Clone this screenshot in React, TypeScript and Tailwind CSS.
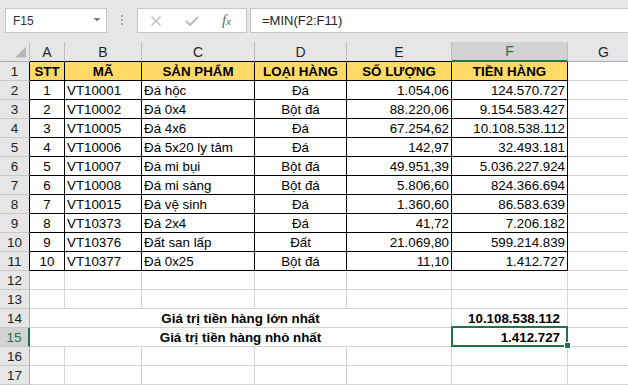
import React from "react";

type Row = [string, string, string, string, string, string];

const data: Row[] = [
  ["1", "VT10001", "Đá hộc", "Đá", "1.054,06", "124.570.727"],
  ["2", "VT10002", "Đá 0x4", "Bột đá", "88.220,06", "9.154.583.427"],
  ["3", "VT10005", "Đá 4x6", "Đá", "67.254,62", "10.108.538.112"],
  ["4", "VT10006", "Đá 5x20 ly tâm", "Đá", "142,97", "32.493.181"],
  ["5", "VT10007", "Đá mi bụi", "Bột đá", "49.951,39", "5.036.227.924"],
  ["6", "VT10008", "Đá mi sàng", "Bột đá", "5.806,60", "824.366.694"],
  ["7", "VT10015", "Đá vệ sinh", "Đá", "1.360,60", "86.583.639"],
  ["8", "VT10373", "Đá 2x4", "Đá", "41,72", "7.206.182"],
  ["9", "VT10376", "Đất san lấp", "Đất", "21.069,80", "599.214.839"],
  ["10", "VT10377", "Đá 0x25", "Bột đá", "11,10", "1.412.727"],
];

const headers = ["STT", "MÃ", "SẢN PHẨM", "LOẠI HÀNG", "SỐ LƯỢNG", "TIỀN HÀNG"];

const base =
  "flex items-end pb-px leading-[15px] whitespace-nowrap overflow-hidden border-r border-b";

const alignCls = [
  "justify-center",
  "justify-start pl-[2px]",
  "justify-start pl-[2px]",
  "justify-center",
  "justify-end pr-[2px]",
  "justify-end pr-[2px]",
];

function RowHeader({ n }: { n: number }) {
  let cls =
    "flex items-end justify-center pb-px leading-[15px] text-[13.5px] border-b border-b-[#c8c8c8] ";
  if (n === 15) cls += "bg-[#d2d2d2] text-[#217346] border-r-2 border-r-[#217346]";
  else if (n >= 1 && n <= 11) cls += "bg-[#e6e6e6] text-[#222222] border-r border-r-black";
  else cls += "bg-[#e6e6e6] text-[#222222] border-r border-r-[#ababab]";
  return <div className={cls}>{n}</div>;
}

function EmptyCell() {
  return <div className={`${base} border-[#d4d4d4] bg-white`} />;
}

export default function App() {
  const rows: React.ReactNode[] = [];
  for (let r = 1; r <= 17; r++) {
    const cells: React.ReactNode[] = [<RowHeader key={`h${r}`} n={r} />];
    if (r === 1) {
      headers.forEach((h, i) => {
        cells.push(
          <div
            key={`c${r}-${i}`}
            className={`${base} border-black bg-[#ffd966] font-bold justify-center`}
          >
            {h}
          </div>
        );
      });
      cells.push(<EmptyCell key={`g${r}`} />);
    } else if (r <= 11) {
      data[r - 2].forEach((v, i) => {
        cells.push(
          <div key={`c${r}-${i}`} className={`${base} border-black bg-white ${alignCls[i]}`}>
            {v}
          </div>
        );
      });
      cells.push(<EmptyCell key={`g${r}`} />);
    } else if (r === 14 || r === 15) {
      cells.push(
        <div
          key={`m${r}`}
          className={`${base} col-span-5 border-[#d4d4d4] bg-white justify-center font-bold`}
        >
          {r === 14 ? "Giá trị tiền hàng lớn nhất" : "Giá trị tiền hàng nhỏ nhất"}
        </div>
      );
      if (r === 14) {
        cells.push(
          <div key={`f${r}`} className={`${base} border-[#d4d4d4] bg-white justify-end pr-[7px] font-bold`}>
            10.108.538.112
          </div>
        );
      } else {
        cells.push(
          <div
            key={`f${r}`}
            className="relative flex items-end pb-px leading-[15px] whitespace-nowrap border-r border-b border-[#d4d4d4] bg-white justify-end pr-[7px] font-bold"
          >
            1.412.727
            <div className="absolute -left-px -top-[2px] w-[117px] h-[21px] border-2 border-[#217346] z-10" />
            <div className="absolute left-[112px] top-[14px] w-[7px] h-[7px] bg-[#217346] border border-white z-20" />
          </div>
        );
      }
      cells.push(<EmptyCell key={`g${r}`} />);
    } else {
      for (let i = 0; i < 7; i++) cells.push(<EmptyCell key={`e${r}-${i}`} />);
    }
    rows.push(...cells);
  }

  const colLetters = ["A", "B", "C", "D", "E", "F", "G"];
  const colHeaderCls = (i: number) => {
    const c =
      "flex items-end justify-center pb-px leading-[16px] text-[14px] border-r border-r-[#bdbdbd] ";
    if (i < 5) return c + "border-b border-b-black bg-[#e6e6e6] text-[#262626]";
    if (i === 5) return c + "border-b-2 border-b-[#217346] bg-[#d2d2d2] text-[#217346]";
    return c + "border-b border-b-[#ababab] bg-[#e6e6e6] text-[#262626]";
  };

  return (
    <div className="w-[628px] h-[385px] overflow-hidden bg-white font-['Liberation_Sans',Arial,sans-serif] text-black">
      {/* Formula bar */}
      <div className="h-[42px] bg-[#e6e6e6] flex items-start pt-[8px]">
        <div className="ml-[5px] w-[102px] h-[25px] bg-white border border-[#c6c6c6] flex items-center pl-[7px] relative">
          <span className="text-[12px] text-[#333333]">F15</span>
          <svg className="absolute left-[87px] top-[9px]" width="8" height="4" viewBox="0 0 8 4">
            <path d="M0.5 0H7.5L4 3.5Z" fill="#7a7a7a" />
          </svg>
        </div>
        <div className="w-[30px] flex flex-col items-center gap-[2px] pt-[7px]">
          <div className="w-[2px] h-[2px] bg-[#a8a8a8]" />
          <div className="w-[2px] h-[2px] bg-[#a8a8a8]" />
          <div className="w-[2px] h-[2px] bg-[#a8a8a8]" />
        </div>
        <div className="w-[110px] h-[25px] bg-white border border-[#c6c6c6] flex items-center">
          <svg className="ml-[13px]" width="10" height="10" viewBox="0 0 10 10">
            <path d="M0.5 0.5L9.5 9.5M9.5 0.5L0.5 9.5" stroke="#bdbdbd" strokeWidth="1.4" />
          </svg>
          <svg className="ml-[24px]" width="14" height="10" viewBox="0 0 14 10">
            <path d="M1 5L5 9L13 1" stroke="#bdbdbd" strokeWidth="2" fill="none" />
          </svg>
          <span className="ml-[23px] font-['Liberation_Serif',serif] italic text-[#666666] leading-none flex items-baseline">
            <span className="text-[15px]">f</span>
            <span className="text-[11px]">x</span>
          </span>
        </div>
        <div className="ml-[3px] flex-1 h-[25px] bg-white border border-r-0 border-[#c6c6c6] flex items-center pl-[11px]">
          <span className="text-[13px] text-[#222222]">=MIN(F2:F11)</span>
        </div>
      </div>

      {/* Sheet grid */}
      <div className="grid grid-cols-[30px_35px_77px_113px_92px_105px_116px_72px] grid-rows-[20px_repeat(17,19px)] text-[13.33px]">
        <div className="relative bg-[#e6e6e6] border-r border-r-[#bdbdbd] border-b border-b-[#ababab]">
          <svg className="absolute left-[15px] top-[5px]" width="12" height="11" viewBox="0 0 12 11">
            <path d="M11 0V10.5H0Z" fill="#b4b4b4" />
          </svg>
        </div>
        {colLetters.map((l, i) => (
          <div key={l} className={colHeaderCls(i)}>
            {l}
          </div>
        ))}
        {rows}
      </div>
    </div>
  );
}
